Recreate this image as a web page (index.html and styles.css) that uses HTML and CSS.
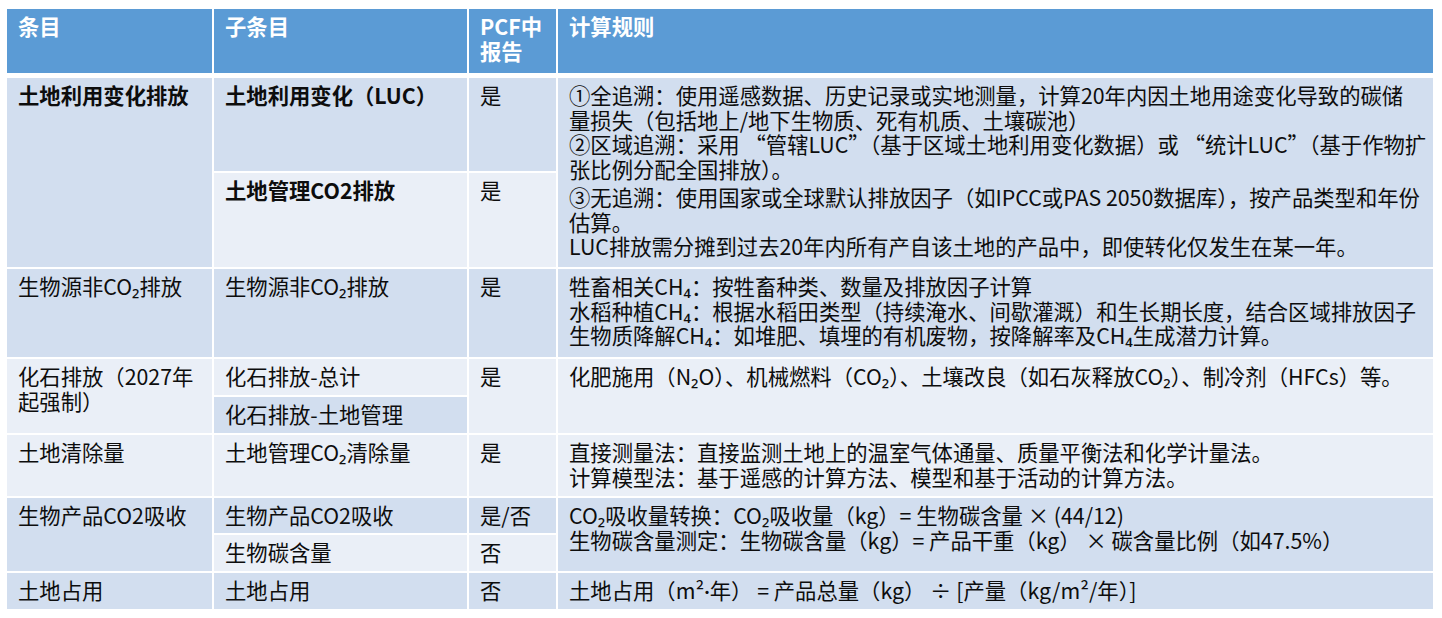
FILE: index.html
```html
<!DOCTYPE html>
<html lang="zh-CN">
<head>
<meta charset="utf-8">
<title>土地相关排放计算规则</title>
<link rel="stylesheet" href="styles.css">
</head>
<body>
<div class="table">
  <div class="cell head">条目</div>
  <div class="cell head">子条目</div>
  <div class="cell head">PCF中<br>报告</div>
  <div class="cell head">计算规则</div>

  <div class="cell dark bold span2">土地利用变化排放</div>
  <div class="cell dark bold">土地利用变化（LUC）</div>
  <div class="cell dark">是</div>
  <div class="cell dark span2 rule">
    <div>①全追溯：使用遥感数据、历史记录或实地测量，计算20年内因土地用途变化导致的碳储</div>
    <div>量损失（包括地上/地下生物质、死有机质、土壤碳池）</div>
    <div>②区域追溯：采用 “管辖LUC”（基于区域土地利用变化数据）或 “统计LUC”（基于作物扩</div>
    <div>张比例分配全国排放）。</div>
    <div class="para">③无追溯：使用国家或全球默认排放因子（如IPCC或PAS 2050数据库），按产品类型和年份</div>
    <div>估算。</div>
    <div>LUC排放需分摊到过去20年内所有产自该土地的产品中，即使转化仅发生在某一年。</div>
  </div>
  <div class="cell light bold">土地管理CO2排放</div>
  <div class="cell light">是</div>

  <div class="cell dark">生物源非CO₂排放</div>
  <div class="cell dark">生物源非CO₂排放</div>
  <div class="cell dark">是</div>
  <div class="cell dark rule">
    <div>牲畜相关CH₄：按牲畜种类、数量及排放因子计算</div>
    <div>水稻种植CH₄：根据水稻田类型（持续淹水、间歇灌溉）和生长期长度，结合区域排放因子</div>
    <div>生物质降解CH₄：如堆肥、填埋的有机废物，按降解率及CH₄生成潜力计算。</div>
  </div>

  <div class="cell light span2 nowrap">化石排放（2027年<br>起强制）</div>
  <div class="cell light">化石排放-总计</div>
  <div class="cell light span2">是</div>
  <div class="cell light span2 rule">
    <div>化肥施用（N₂O）、机械燃料（CO₂）、土壤改良（如石灰释放CO₂）、制冷剂（HFCs）等。</div>
  </div>
  <div class="cell dark">化石排放-土地管理</div>

  <div class="cell light">土地清除量</div>
  <div class="cell light">土地管理CO₂清除量</div>
  <div class="cell light">是</div>
  <div class="cell light rule">
    <div>直接测量法：直接监测土地上的温室气体通量、质量平衡法和化学计量法。</div>
    <div>计算模型法：基于遥感的计算方法、模型和基于活动的计算方法。</div>
  </div>

  <div class="cell dark span2">生物产品CO2吸收</div>
  <div class="cell dark">生物产品CO2吸收</div>
  <div class="cell dark">是/否</div>
  <div class="cell dark span2 rule">
    <div>CO₂吸收量转换：CO₂吸收量（kg）= 生物碳含量 × (44/12)</div>
    <div>生物碳含量测定：生物碳含量（kg）= 产品干重（kg） × 碳含量比例（如47.5%）</div>
  </div>
  <div class="cell light">生物碳含量</div>
  <div class="cell light">否</div>

  <div class="cell dark">土地占用</div>
  <div class="cell dark">土地占用</div>
  <div class="cell dark">否</div>
  <div class="cell dark rule">
    <div>土地占用（m²<span class="lat">·</span>年） = 产品总量（kg） ÷ [产量（kg/m²/年）]</div>
  </div>
</div>
</body>
</html>
```

FILE: styles.css
```css
html, body {
  margin: 0;
  padding: 0;
  background: #ffffff;
}

body {
  font-family: "Noto Sans CJK SC", "Noto Sans", sans-serif;
  font-size: 21.33px;
  line-height: 24.5px;
  color: #0d0d0d;
}

.table {
  display: grid;
  grid-template-columns: 205px 253px 87px 875px;
  grid-template-rows: 67px 93px 94px 88px 36px 36px 61px 35px 36px 36px;
  column-gap: 2px;
  row-gap: 2px;
  margin: 9px 0 0 7px;
  width: 1426px;
}

.cell {
  padding: 5px 12px 0 11px;
  box-sizing: border-box;
  overflow: visible;
}

.head {
  background: #5b9bd5;
  color: #ffffff;
  font-weight: 700;
  margin-bottom: 3px;
}

.dark {
  background: #d2deef;
}

.light {
  background: #eaeff7;
}

.bold {
  font-weight: 700;
}

.span2 {
  grid-row: span 2;
}

.rule, .nowrap {
  white-space: nowrap;
}

.para {
  margin-top: 4px;
}

.lat {
  font-family: "Lato", "Liberation Sans", sans-serif;
}
```
